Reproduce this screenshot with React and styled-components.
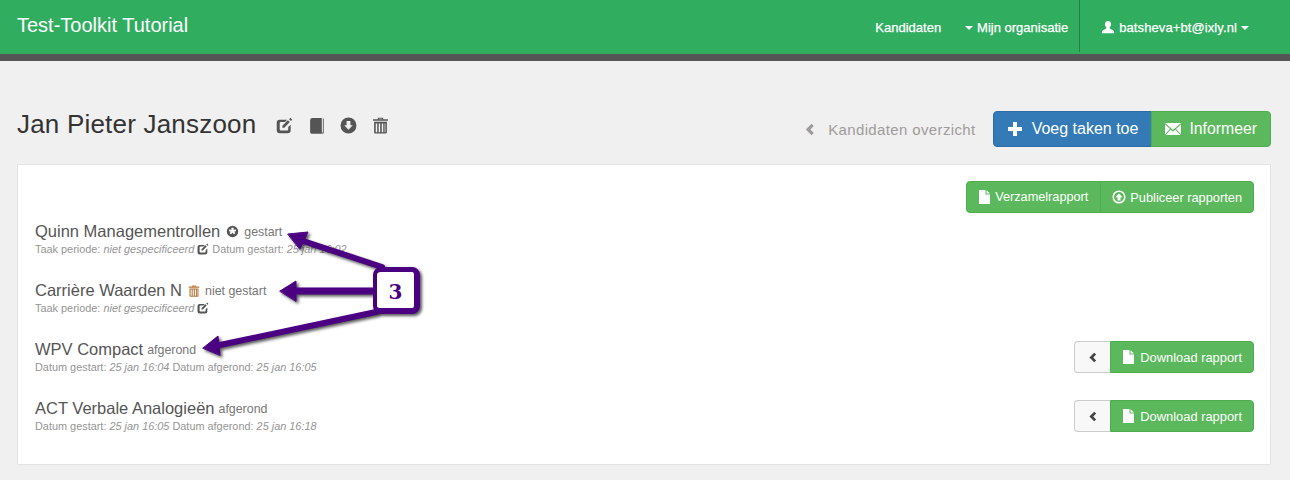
import React from "react";
import styled, { createGlobalStyle } from "styled-components";

const Global = createGlobalStyle`
  html, body { margin: 0; padding: 0; }
  body { background: #f0f0f0; font-family: "Liberation Sans", Arial, sans-serif; color: #333; overflow: hidden; }
  * { box-sizing: border-box; }
`;

const Page = styled.div`position: relative; width: 1290px; height: 480px; overflow: hidden;`;
const Navbar = styled.nav`
  height: 61px; background: #31ad5f; border-bottom: 7px solid #555;
  display: flex; align-items: stretch; justify-content: space-between;
`;
const Brand = styled.div`color: #fff; font-size: 20px; line-height: 50px; padding-left: 17px;`;
const NavRight = styled.div`display: flex; align-items: stretch; padding-right: 41px;`;
const NavItem = styled.div`
  color: #fff; font-size: 13px; display: flex; align-items: center; gap: 4px; letter-spacing: ${p => p.$ls || 0}px;
  height: 52px; padding: 2px 0 0; margin-left: ${p => p.$ml || 0}px; -webkit-text-stroke: 0.25px #fff;
`;
const NavDivider = styled.div`width: 1px; height: 52px; background: #2a7d49; margin: 0 21px 0 11px;`;
const Caret = styled.span`
  display: inline-block; width: 0; height: 0; border-left: 4px solid transparent; border-right: 4px solid transparent;
  border-top: 4px solid #fff; margin-top: 2px;
`;

const Header = styled.header`
  display: flex; justify-content: space-between; align-items: flex-start;
  padding: 50px 19px 0 17px; height: 86px;
`;
const TitleGroup = styled.div`display: flex; align-items: center; height: 28px; margin-top: -1px; color: #555;`;
const Title = styled.h1`
  margin: 0; font-size: 26px; font-weight: 400; line-height: 28px; color: #333; margin-right: 20px; letter-spacing: 0.2px;
`;
const TitleIcons = styled.div`display: flex; align-items: center; gap: 15px; margin-top: 2px;`;
const HeaderActions = styled.div`display: flex; align-items: center;`;
const BackLink = styled.div`
  color: #a09b9b; font-size: 15px; letter-spacing: 0.37px; display: flex; align-items: center; gap: 12px; margin-right: 17px;
`;
const Group = styled.div`display: inline-flex;`;
const Btn = styled.div`
  height: ${p => p.$h}px; padding: ${p => p.$pad}; font-size: ${p => p.$fs}px; color: #fff;
  display: flex; align-items: center; gap: ${p => p.$gap}px; white-space: nowrap;
  background: ${p => (p.$blue ? "#337ab7" : "#5cb85c")};
  border: 1px solid ${p => (p.$blue ? "#2e6da4" : "#4cae4c")};
  border-radius: ${p => (p.$first ? "4px 0 0 4px" : p.$last ? "0 4px 4px 0" : "4px")};
  margin-left: ${p => (p.$first || p.$flush ? 0 : -1)}px;
`;
const ToggleBtn = styled.div`
  width: 36px; height: 32px; background: #f8f8f8; border: 1px solid #ccc; border-right: 0;
  border-radius: 4px 0 0 4px; display: flex; align-items: center; justify-content: center; color: #444;
`;

const Panel = styled.section`
  margin: 17px 19px 0 17px; background: #fff; border: 1px solid #e4e4e4; height: 301px; padding: 16px 16px 7px 17px;
`;
const PanelTop = styled.div`display: flex; justify-content: flex-end; margin-bottom: 8px;`;
const Row = styled.div`height: 59px; display: flex; justify-content: space-between; align-items: flex-start;`;
const RowInfo = styled.div`display: flex; flex-direction: column;`;
const RowTitle = styled.div`display: flex; align-items: center; height: 20px; line-height: 20px;`;
const TaskName = styled.span`font-size: 16.5px; color: #555;`;
const Status = styled.span`font-size: 12.4px; color: #777; margin-left: 4px; margin-top: 2px;`;
const StatusIcon = styled.span`display: inline-flex; margin-left: 6px; margin-right: 1px; color: ${p => p.$color || "#555"}; margin-top: 1px;`;
const Meta = styled.div`font-size: 10.9px; color: #959595; line-height: 15px; margin-top: 1px; white-space: nowrap;`;
const Em = styled.em`font-style: italic;`;
const MetaIcon = styled.span`display: inline-block; vertical-align: -2px; margin: 0 3px 0 0; color: #555;`;
const RowActions = styled.div`display: flex; margin-top: 2px;`;

const Overlay = styled.svg`
  position: absolute; left: 0; top: 0; pointer-events: none;
  filter: drop-shadow(2px 2px 1.5px rgba(0,0,0,.65));
`;
const Badge = styled.div`
  position: absolute; left: 373px; top: 267px; width: 47px; height: 47px; background: #fff;
  border-style: solid; border-color: #4b0082; border-width: 5px 6px 6px 4px; border-radius: 8px;
  box-shadow: 2px 2px 3px rgba(0,0,0,.65);
  display: flex; align-items: center; justify-content: center; padding-top: 3px;
  font-family: "DejaVu Serif", "Liberation Serif", serif; font-weight: 700; font-size: 20px; color: #4b0082;
`;

const Svg = ({ s = 14, children }) => (
  <svg width={s} height={s} viewBox="0 0 16 16" fill="currentColor" aria-hidden="true">{children}</svg>
);
const Edit = ({ s }) => (
  <Svg s={s}>
    <path d="M3.500 2.500H10.500L8.500 4.700H4.500a1 1 0 0 0-1 1v6a1 1 0 0 0 1 1h6a1 1 0 0 0 1-1V9.500l2.300-2.300v5.300a2.800 2.800 0 0 1-2.800 2.800H3.500A2.800 2.800 0 0 1 .7 12.500V5.300a2.800 2.800 0 0 1 2.800-2.800z"/>
    <path d="M6 8.200l5.200-5.200 1.800 1.800L7.800 10H6zM12.300 2l1.200-1.200 1.800 1.800L14.100 3.800z"/>
  </Svg>
);
const Book = () => (
  <Svg s={17}>
    <path d="M4 1h9v12.700H3.500A1.500 1.500 0 0 0 2 15V3a2 2 0 0 1 2-2z"/>
    <path d="M14 1.500h.8V15.500H3v-.9h11z"/>
    <path d="M2 14.500a1.500 1.500 0 0 1 1.500-1.500H13v2.500H3.500A1.500 1.500 0 0 1 2 14.500z"/>
  </Svg>
);
const CircleDown = () => (
  <Svg s={17}>
    <path fillRule="evenodd" d="M8 .5a7.500 7.500 0 1 1 0 15 7.500 7.500 0 0 1 0-15zM6.200 3.800v4H4L8 12l4-4.200H9.800v-4z"/>
  </Svg>
);
const Trash = ({ s = 17 }) => (
  <Svg s={s}>
    <path fillRule="evenodd" d="M5.500 2V.8h5V2H15v1.600H1V2zM6.500 2h3v-.4h-3zM2 4.500h12v10a1 1 0 0 1-1 1H3a1 1 0 0 1-1-1zM3.500 6v8.300h1.400V6zm2.800 0v8.300h1.400V6H6.300zm2.900 0v8.300h1.400V6H9.200zm2.700 0v8.300h.7V6z"/>
  </Svg>
);
const Chevron = ({ s = 11 }) => (
  <Svg s={s}><path d="M10.500 1l2.800 2.800L9.100 8l4.200 4.200-2.800 2.800-7-7z"/></Svg>
);
const Plus = () => (
  <Svg s={16}><path d="M6 1h4v5h5v4h-5v5H6v-5H1V6h5z"/></Svg>
);
const Mail = () => (
  <svg width="16" height="14" viewBox="0 0 16 14" fill="#fff" aria-hidden="true">
    <path d="M0 1h16L8 8z"/><path d="M0 2.200v10l5-5.200zM16 2.200v10l-5-5.200zM5.800 7.800L8 9.800l2.200-2 5.300 5.200H.5z"/>
  </svg>
);
const FileIcon = () => (
  <svg width="11" height="14" viewBox="0 0 11 14" fill="currentColor" aria-hidden="true">
    <path d="M0 0h6.500v4.500H11V14H0zM7.500.2L11 3.600H7.500z"/>
  </svg>
);
const CircleUp = () => (
  <Svg s={14}>
    <path fillRule="evenodd" d="M8 .5a7.500 7.500 0 1 1 0 15 7.500 7.500 0 0 1 0-15zm0 1.800a5.700 5.700 0 1 0 0 11.400A5.700 5.700 0 0 0 8 2.300zM8 4l4 4.200H9.700V12H6.300V8.200H4z"/>
  </Svg>
);
const User = () => (
  <Svg s={14}>
    <path d="M8 1c2.300 0 3.500 1.500 3.500 3.700 0 1.700-.8 3.300-1.700 4 0 .8.200 1.200 1 1.500 2 .7 4.200 1.500 4.200 3.800v1H1v-1c0-2.300 2.200-3.100 4.200-3.800.8-.3 1-.7 1-1.500-.9-.7-1.700-2.300-1.700-4C4.500 2.500 5.700 1 8 1z"/>
  </Svg>
);
const Started = () => (
  <Svg s={13}>
    <path fillRule="evenodd" d="M8 1a7 7 0 1 1 0 14A7 7 0 0 1 8 1zM6.600 3.500V6L4.200 5.300 3.500 7.500l2.300.7-1.400 2 1.800 1.300L8 9.500l1.800 2 1.800-1.300-1.400-2 2.300-.7-.7-2.200L9.400 6V3.500z"/>
  </Svg>
);

const Download = () => (
  <RowActions>
    <ToggleBtn><Chevron /></ToggleBtn>
    <Btn $last $flush $h={32} $pad="0 11px 0 12px" $fs={12.9} $gap={6}>
      <FileIcon />Download rapport
    </Btn>
  </RowActions>
);
const MetaEdit = () => <MetaIcon><Edit s={12} /></MetaIcon>;

export default function App() {
  return (
    <Page>
      <Global />
      <Navbar>
        <Brand>Test-Toolkit Tutorial</Brand>
        <NavRight>
          <NavItem>Kandidaten</NavItem>
          <NavItem $ml={24}><Caret />Mijn organisatie</NavItem>
          <NavDivider />
          <NavItem $ls={0.1}><User />batsheva+bt@ixly.nl<Caret /></NavItem>
        </NavRight>
      </Navbar>
      <Header>
        <TitleGroup>
          <Title>Jan Pieter Janszoon</Title>
          <TitleIcons>
            <Edit s={17} /><Book /><CircleDown /><Trash />
          </TitleIcons>
        </TitleGroup>
        <HeaderActions>
          <BackLink><Chevron s={13} />Kandidaten overzicht</BackLink>
          <Group>
            <Btn $first $blue $h={36} $pad="0 13px 0 13px" $fs={16} $gap={9}><Plus />Voeg taken toe</Btn>
            <Btn $last $h={36} $pad="0 13px" $fs={15.8} $gap={8}><Mail />Informeer</Btn>
          </Group>
        </HeaderActions>
      </Header>
      <Panel>
        <PanelTop>
          <Group>
            <Btn $first $h={32} $pad="0 12px" $fs={12.7} $gap={5}><FileIcon />Verzamelrapport</Btn>
            <Btn $last $h={32} $pad="0 11px" $fs={12.8} $gap={4}><CircleUp />Publiceer rapporten</Btn>
          </Group>
        </PanelTop>
        <Row>
          <RowInfo>
            <RowTitle>
              <TaskName>Quinn Managementrollen</TaskName>
              <StatusIcon><Started /></StatusIcon>
              <Status>gestart</Status>
            </RowTitle>
            <Meta>Taak periode: <Em>niet gespecificeerd</Em> <MetaEdit />Datum gestart: <Em>25 jan 16:02</Em></Meta>
          </RowInfo>
        </Row>
        <Row>
          <RowInfo>
            <RowTitle>
              <TaskName>Carrière Waarden N</TaskName>
              <StatusIcon $color="#b5763a"><Trash s={12} /></StatusIcon>
              <Status>niet gestart</Status>
            </RowTitle>
            <Meta>Taak periode: <Em>niet gespecificeerd</Em> <MetaEdit /></Meta>
          </RowInfo>
        </Row>
        <Row>
          <RowInfo>
            <RowTitle>
              <TaskName>WPV Compact</TaskName>
              <Status>afgerond</Status>
            </RowTitle>
            <Meta>Datum gestart: <Em>25 jan 16:04</Em> Datum afgerond: <Em>25 jan 16:05</Em></Meta>
          </RowInfo>
          <Download />
        </Row>
        <Row>
          <RowInfo>
            <RowTitle>
              <TaskName>ACT Verbale Analogieën</TaskName>
              <Status>afgerond</Status>
            </RowTitle>
            <Meta>Datum gestart: <Em>25 jan 16:05</Em> Datum afgerond: <Em>25 jan 16:18</Em></Meta>
          </RowInfo>
          <Download />
        </Row>
      </Panel>
      <Overlay width="1290" height="480" viewBox="0 0 1290 480">
        <g fill="#4b0082" stroke="#4b0082" strokeLinejoin="round" strokeLinecap="round">
          <path d="M382 267L300 240" strokeWidth="6" fill="none" />
          <path d="M288 234L308 232L300 249z" strokeWidth="1" />
          <path d="M372 291L293 291" strokeWidth="7" fill="none" />
          <path d="M280 291L296 281L296 301z" strokeWidth="1" />
          <path d="M376 312L215 346" strokeWidth="6" fill="none" />
          <path d="M203 348L218 336L220 355z" strokeWidth="1" />
        </g>
      </Overlay>
      <Badge>3</Badge>
    </Page>
  );
}
